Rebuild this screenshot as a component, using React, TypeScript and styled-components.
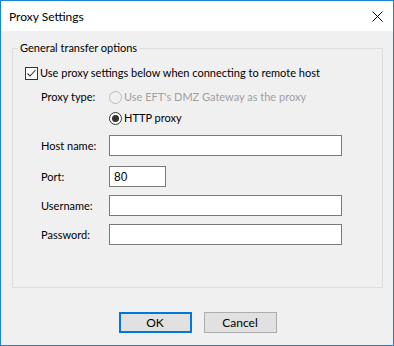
import styled, { createGlobalStyle } from "styled-components";

const GlobalStyle = createGlobalStyle`
  html, body {
    margin: 0;
    padding: 0;
    background: #f0f0f0;
  }
  * {
    box-sizing: border-box;
  }
`;

const Window = styled.div`
  width: 394px;
  height: 346px;
  display: flex;
  flex-direction: column;
  border: 1px solid #1883d7;
  background: #f0f0f0;
  font-family: Lato, "Noto Sans", sans-serif;
  font-size: 11px;
  color: #000;
`;

const TitleBar = styled.div`
  height: 30px;
  flex: none;
  display: flex;
  align-items: center;
  justify-content: space-between;
  background: #ffffff;
  padding: 0 10px 0 8px;
`;

const Title = styled.span`
  font-size: 12px;
`;

const CloseButton = styled.div`
  width: 12px;
  height: 12px;
  display: flex;
  align-items: center;
  justify-content: center;
`;

const Body = styled.div`
  flex: 1;
  display: flex;
  flex-direction: column;
  padding: 9px 10px 0 11px;
`;

const GroupBox = styled.fieldset`
  margin: 0;
  padding: 0;
  height: 248px;
  flex: none;
  border: 1px solid #dcdcdc;
  display: flex;
  flex-direction: column;
`;

const Legend = styled.legend`
  margin-left: 5px;
  padding: 0 2px;
  line-height: 16px;
`;

const Row = styled.div<{ $gap: number; $indent: number }>`
  display: flex;
  align-items: center;
  margin-top: ${(p) => p.$gap}px;
  padding-left: ${(p) => p.$indent}px;
  line-height: 16px;
`;

const FieldLabel = styled.span`
  width: 68px;
  flex: none;
`;

const CheckBox = styled.span`
  width: 13px;
  height: 13px;
  border: 1px solid #333333;
  background: #ffffff;
  display: flex;
  align-items: center;
  justify-content: center;
  margin-right: 2px;
  flex: none;
`;

const Radio = styled.span<{ $disabled?: boolean; $checked?: boolean }>`
  width: 13px;
  height: 13px;
  border-radius: 50%;
  border: 1px solid ${(p) => (p.$disabled ? "#bcbcbc" : "#333333")};
  background: ${(p) => (p.$disabled ? "#f0f0f0" : "#ffffff")};
  display: flex;
  align-items: center;
  justify-content: center;
  margin-right: 2px;
  flex: none;

  &::after {
    content: "";
    display: ${(p) => (p.$checked ? "block" : "none")};
    width: 7px;
    height: 7px;
    border-radius: 50%;
    background: #333333;
  }
`;

const OptionText = styled.span<{ $disabled?: boolean }>`
  color: ${(p) => (p.$disabled ? "#a0a0a0" : "#000")};
`;

const TextInput = styled.div<{ $width: number }>`
  width: ${(p) => p.$width}px;
  height: 21px;
  border: 1px solid #7a7a7a;
  background: #ffffff;
  font-family: "Liberation Sans", Arial, sans-serif;
  font-size: 12px;
  display: flex;
  align-items: center;
  padding-left: 4px;
`;

const Footer = styled.div`
  display: flex;
  justify-content: center;
  gap: 12px;
  padding-top: 24px;
`;

const Button = styled.div<{ $primary?: boolean }>`
  width: 73px;
  height: 21px;
  background: #e1e1e1;
  border: ${(p) => (p.$primary ? "2px solid #0078d7" : "1px solid #adadad")};
  display: flex;
  align-items: center;
  justify-content: center;
  font-size: 12px;
`;

export default function App() {
  return (
    <>
      <GlobalStyle />
      <Window>
        <TitleBar>
          <Title>Proxy Settings</Title>
          <CloseButton>
            <svg width="11" height="11" viewBox="0 0 11 11">
              <path d="M0.5 0.5 L10.5 10.5 M10.5 0.5 L0.5 10.5" stroke="#000" strokeWidth="1" />
            </svg>
          </CloseButton>
        </TitleBar>
        <Body>
          <GroupBox>
            <Legend>General transfer options</Legend>
            <Row $gap={9} $indent={12}>
              <CheckBox>
                <svg width="11" height="11" viewBox="0 0 11 11">
                  <path d="M1.5 5.5 L4 8 L9.5 2" stroke="#333" strokeWidth="1.1" fill="none" />
                </svg>
              </CheckBox>
              <span>Use proxy settings below when connecting to remote host</span>
            </Row>
            <Row $gap={8} $indent={28}>
              <FieldLabel>Proxy type:</FieldLabel>
              <Radio $disabled />
              <OptionText $disabled>Use EFT's DMZ Gateway as the proxy</OptionText>
            </Row>
            <Row $gap={5} $indent={96}>
              <Radio $checked />
              <OptionText>HTTP proxy</OptionText>
            </Row>
            <Row $gap={9} $indent={28}>
              <FieldLabel>Host name:</FieldLabel>
              <TextInput $width={233} />
            </Row>
            <Row $gap={10} $indent={28}>
              <FieldLabel>Port:</FieldLabel>
              <TextInput $width={57}>80</TextInput>
            </Row>
            <Row $gap={8} $indent={28}>
              <FieldLabel>Username:</FieldLabel>
              <TextInput $width={233} />
            </Row>
            <Row $gap={8} $indent={28}>
              <FieldLabel>Password:</FieldLabel>
              <TextInput $width={233} />
            </Row>
          </GroupBox>
          <Footer>
            <Button $primary>OK</Button>
            <Button>Cancel</Button>
          </Footer>
        </Body>
      </Window>
    </>
  );
}
